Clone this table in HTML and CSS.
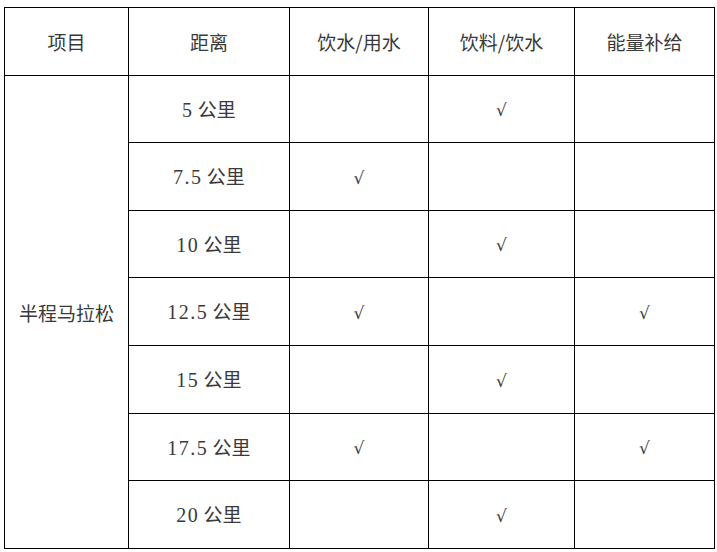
FILE: index.html
```html
<!DOCTYPE html>
<html lang="zh">
<head>
<meta charset="utf-8">
<link rel="stylesheet" href="styles.css">
</head>
<body>
<table class="grid">
  <colgroup>
    <col class="c1"><col class="c2"><col class="c3"><col class="c4"><col class="c5">
  </colgroup>
  <tr class="h68"><td>项目</td><td>距离</td><td>饮水/用水</td><td>饮料/饮水</td><td>能量补给</td></tr>
  <tr class="h67"><td rowspan="7">半程马拉松</td><td><span class="num">5</span> 公里</td><td></td><td class="ck">√</td><td></td></tr>
  <tr class="h68"><td><span class="num">7.5</span> 公里</td><td class="ck">√</td><td></td><td></td></tr>
  <tr class="h67"><td><span class="num">10</span> 公里</td><td></td><td class="ck">√</td><td></td></tr>
  <tr class="h68"><td><span class="num">12.5</span> 公里</td><td class="ck">√</td><td></td><td class="ck">√</td></tr>
  <tr class="h68"><td><span class="num">15</span> 公里</td><td></td><td class="ck">√</td><td></td></tr>
  <tr class="h67"><td><span class="num">17.5</span> 公里</td><td class="ck">√</td><td></td><td class="ck">√</td></tr>
  <tr class="h68"><td><span class="num">20</span> 公里</td><td></td><td class="ck">√</td><td></td></tr>
</table>
</body>
</html>
```
FILE: styles.css
```css
html, body {
  margin: 0;
  padding: 0;
  background: #ffffff;
}
body {
  padding: 7px 0 0 4px;
}
.grid {
  border-collapse: collapse;
  table-layout: fixed;
  width: 710px;
  font-family: "Noto Sans CJK SC", "Liberation Serif", serif;
  font-size: 19px;
  color: #3a3a3a;
}
.c1 { width: 124px; }
.c2 { width: 161px; }
.c3 { width: 139px; }
.c4 { width: 146px; }
.c5 { width: 140px; }
.grid td {
  border: 1px solid #000000;
  text-align: center;
  vertical-align: middle;
  padding: 0;
  line-height: 1;
}
.h68 { height: 68px; }
.h67 { height: 67px; }
.num {
  font-family: "Liberation Serif", serif;
  font-size: 20px;
  letter-spacing: 1.5px;
}
.grid td.ck {
  font-family: "DejaVu Serif", "Liberation Serif", serif;
  font-size: 17px;
  padding-top: 3px;
}
```
